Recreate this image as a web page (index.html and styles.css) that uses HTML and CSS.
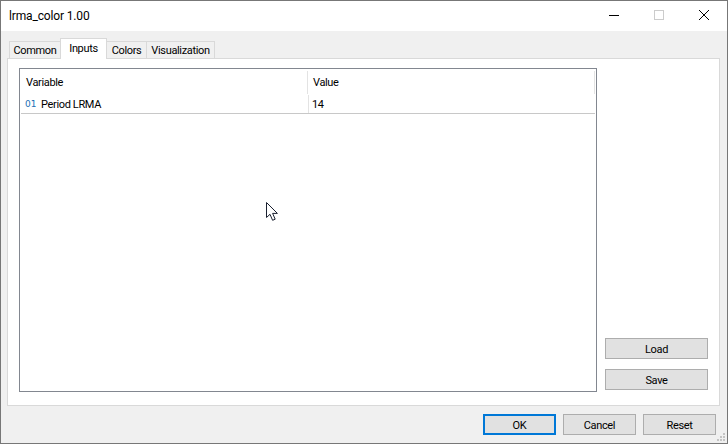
FILE: index.html
```html
<!DOCTYPE html>
<html lang="en">
<head>
<meta charset="utf-8">
<title>lrma_color 1.00</title>
<link rel="stylesheet" href="styles.css">
</head>
<body>
<div class="window">
  <header class="titlebar">
    <span class="title">lrma_color 1.00</span>
    <div class="controls">
      <span class="control"><svg width="12" height="12" viewBox="0 0 12 12"><path d="M1 6.5h10" stroke="#000" fill="none"/></svg></span>
      <span class="control"><svg width="12" height="12" viewBox="0 0 12 12"><rect x="1.5" y="1.5" width="9" height="9" stroke="#cccccc" fill="none"/></svg></span>
      <span class="control"><svg width="12" height="12" viewBox="0 0 12 12"><path d="M1 1l10 10M11 1L1 11" stroke="#000" fill="none"/></svg></span>
    </div>
  </header>
  <main class="content">
    <nav class="tabs">
      <span class="tab tab-common">Common</span>
      <span class="tab tab-active">Inputs</span>
      <span class="tab tab-colors">Colors</span>
      <span class="tab tab-vis">Visualization</span>
    </nav>
    <section class="panel">
      <div class="list">
        <div class="list-head">
          <span class="col col-var">Variable</span>
          <span class="col col-val">Value</span>
        </div>
        <div class="list-row">
          <span class="col col-var"><span class="type">01</span>Period LRMA</span>
          <span class="col col-val">14</span>
        </div>
      </div>
      <div class="side">
        <button class="btn btn-side">Load</button>
        <button class="btn btn-side">Save</button>
      </div>
    </section>
    <footer class="actions">
      <button class="btn btn-action btn-default">OK</button>
      <button class="btn btn-action">Cancel</button>
      <button class="btn btn-action">Reset</button>
    </footer>
  </main>
  <svg class="cursor" width="14" height="20" viewBox="0 0 14 20"><path d="M.5.5v15l3.5-3.2 2.6 6 2.6-1.1-2.6-5.8h4.8z" fill="#fff" stroke="#1a2030"/></svg>
  <svg class="grip" width="10" height="10" viewBox="0 0 10 10"><path d="M7 1h2v2H7zM4 4h2v2H4zM7 4h2v2H7zM1 7h2v2H1zM4 7h2v2H4zM7 7h2v2H7z" fill="#c4c4c4"/></svg>
</div>
</body>
</html>
```
FILE: styles.css
```css
* { box-sizing: border-box; }
html, body { margin: 0; padding: 0; }
body {
  width: 728px;
  height: 444px;
  overflow: hidden;
  font-family: Roboto, "Open Sans", sans-serif;
  font-size: 11px;
  letter-spacing: -0.35px;
  color: #000;
}
.window {
  position: relative;
  width: 728px;
  height: 444px;
  display: flex;
  flex-direction: column;
  background: #f0f0f0;
  border: 1px solid #777;
}
.titlebar {
  height: 30px;
  flex: none;
  background: #fff;
  display: flex;
  align-items: center;
  justify-content: space-between;
  padding-left: 8px;
}
.title { font-size: 12px; letter-spacing: -0.15px; }
.controls { display: flex; height: 30px; padding: 0 1px 2px 0; }
.control {
  width: 45px;
  display: flex;
  align-items: center;
  justify-content: center;
}
.content {
  flex: 1;
  display: flex;
  flex-direction: column;
  padding: 8px 7px 0 6px;
}
.tabs {
  display: flex;
  align-items: flex-end;
  height: 20px;
  padding-left: 2px;
  position: relative;
  z-index: 1;
  margin-bottom: -1px;
}
.tab {
  height: 18px;
  display: flex;
  align-items: center;
  justify-content: center;
  background: #f0f0f0;
  border: 1px solid #d9d9d9;
  border-left-width: 0;
  padding-top: 1px;
}
.tab-common { width: 52px; border-left-width: 1px; }
.tab-active {
  width: 47px;
  height: 21px;
  background: #fff;
  border-left-width: 1px;
  border-bottom: 0;
  margin-left: -1px;
  padding: 0 0 2px;
}
.tab-colors { width: 40px; }
.tab-vis { width: 68px; }
.panel {
  height: 348px;
  flex: none;
  background: #fff;
  border: 1px solid #d9d9d9;
  display: flex;
  justify-content: space-between;
  padding: 9px 11px 13px 11px;
}
.list {
  width: 578px;
  background: #fff;
  border: 1px solid #828790;
}
.list-head, .list-row { display: flex; }
.list-head { height: 25px; padding-top: 2px; }
.list-row { height: 20px; padding-top: 1px; border-bottom: 1px solid #c8c8c8; margin: 0 1px; }
.col { display: flex; align-items: center; }
.col-var { width: 287px; padding-left: 6px; }
.col-val { flex: 1; padding-left: 5px; border-left: 1px solid #e3e3e3; }
.list-row .col-var { padding-left: 4px; }
.list-row .col-val { padding-left: 3px; }
.list-head .col-val { border-right: 1px solid #e3e3e3; margin-right: 1px; }
.type {
  color: #1c6fb5;
  width: 16px;
  font-family: "DejaVu Sans", sans-serif;
  font-size: 9px;
  letter-spacing: 0;
}
.side {
  display: flex;
  flex-direction: column;
  justify-content: flex-end;
  gap: 10px;
  padding-bottom: 2px;
}
.btn {
  font: inherit;
  letter-spacing: inherit;
  color: #000;
  background: #e1e1e1;
  border: 1px solid #adadad;
  padding: 1px 0 0;
}
.btn-side { width: 103px; height: 21px; }
.actions {
  flex: 1;
  display: flex;
  justify-content: flex-end;
  gap: 7px;
  padding-top: 8px;
  margin-right: -7px;
  padding-right: 11px;
}
.btn-action { width: 73px; height: 21px; }
.btn-default { border: 2px solid #0078d7; }
.cursor { position: absolute; left: 265px; top: 201px; }
.grip { position: absolute; right: 1px; bottom: 1px; }
```
